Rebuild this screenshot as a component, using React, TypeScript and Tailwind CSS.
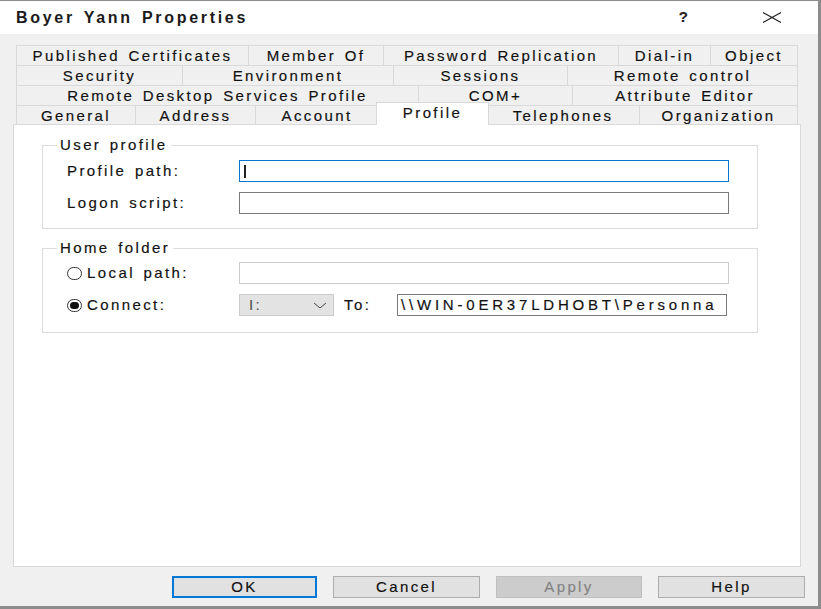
import React from "react";

const tabRows: { label: string; w: string }[][] = [
  [
    { label: "Published Certificates", w: "w-[232px]" },
    { label: "Member Of", w: "w-[135px]" },
    { label: "Password Replication", w: "w-[235px]" },
    { label: "Dial-in", w: "w-[92px]" },
    { label: "Object", w: "w-[88px]" },
  ],
  [
    { label: "Security", w: "w-[166px]" },
    { label: "Environment", w: "w-[211px]" },
    { label: "Sessions", w: "w-[174px]" },
    { label: "Remote control", w: "w-[231px]" },
  ],
  [
    { label: "Remote Desktop Services Profile", w: "w-[402px]" },
    { label: "COM+", w: "w-[154px]" },
    { label: "Attribute Editor", w: "w-[226px]" },
  ],
];

const lastRow: { label: string; w: string; sel?: boolean }[] = [
  { label: "General", w: "w-[119px]" },
  { label: "Address", w: "w-[120px]" },
  { label: "Account", w: "w-[123px]" },
  { label: "Profile", w: "w-[113px]", sel: true },
  { label: "Telephones", w: "w-[152px]" },
  { label: "Organization", w: "w-[159px]" },
];

function Radio({ checked }: { checked?: boolean }) {
  return (
    <span className="w-[15px] h-[13px] rounded-full border border-[#333333] bg-white flex items-center justify-center shrink-0">
      {checked && <span className="w-[9px] h-[7px] rounded-full bg-[#111111]" />}
    </span>
  );
}

export default function App() {
  return (
    <div className="w-[821px] h-[609px] flex flex-col border-t border-r-[3px] border-b-[3px] border-[#8c8c8c] bg-[#f0f0f0] text-[15px] text-[#111111] tracking-[2.4px] [word-spacing:2px] [-webkit-text-stroke:0.18px_#111111] [font-family:'Liberation_Sans',Arial,sans-serif] overflow-hidden">
      {/* Title bar */}
      <div className="h-[33px] bg-white flex items-center pl-[16px] pr-[36px] shrink-0">
        <span className="text-[16px] font-bold tracking-[2.7px] text-[#1a1a1a] [-webkit-text-stroke:0px]">Boyer Yann Properties</span>
        <span className="ml-auto text-[15px] font-bold tracking-normal text-[#222]">?</span>
        <svg className="ml-[74px]" width="20" height="11" viewBox="0 0 20 11">
          <path d="M1 0.5 L19 10.5 M19 0.5 L1 10.5" stroke="#222" strokeWidth="1.2" fill="none" />
        </svg>
      </div>

      {/* Body */}
      <div className="flex-1 flex flex-col pl-[13px] pt-[11px]">
        {/* Tabs */}
        <div className="ml-[3px] w-[782px] flex flex-col">
          {tabRows.map((row, i) => (
            <div key={i} className="flex h-[20px]">
              {row.map((t, j) => (
                <div
                  key={t.label}
                  className={`${t.w} h-[20px] border-t border-l border-[#d9d9d9] ${j === row.length - 1 ? "border-r" : ""} flex items-center justify-center leading-[19px] whitespace-nowrap`}
                >
                  {t.label}
                </div>
              ))}
            </div>
          ))}
          <div className="flex h-[19px] items-end">
            {lastRow.map((t, j) =>
              t.sel ? (
                <div
                  key={t.label}
                  className={`${t.w} h-[23px] mx-[-2px] mb-[-1px] relative z-10 bg-white border-t border-l border-r border-[#d9d9d9] flex justify-center pt-[2px] leading-[16px] whitespace-nowrap`}
                >
                  {t.label}
                </div>
              ) : (
                <div
                  key={t.label}
                  className={`${t.w} h-[19px] border-t border-l border-[#d9d9d9] ${j === lastRow.length - 1 ? "border-r" : ""} ${j === 4 ? "border-l-0" : ""} ${j === 2 ? "border-r-0" : ""} flex items-center justify-center leading-[19px] whitespace-nowrap`}
                >
                  {t.label}
                </div>
              )
            )}
          </div>
        </div>

        {/* Panel */}
        <div className="w-[788px] h-[443px] border border-[#d9d9d9] bg-white flex flex-col pl-[28px]">
          <fieldset className="mt-[12px] w-[716px] h-[92px] border border-[#dcdcdc] flex flex-col">
            <legend className="ml-[14px] px-[3px] leading-[16px]">User profile</legend>
            <div className="flex flex-col gap-[10px] mt-[7px] pl-[24px]">
              <div className="flex items-center h-[22px]">
                <span className="w-[172px] shrink-0">Profile path:</span>
                <div className="w-[490px] shrink-0 h-[22px] border border-[#0078d7] bg-white flex items-center pl-[4px]">
                  <span className="w-[2px] h-[13px] bg-[#222]" />
                </div>
              </div>
              <div className="flex items-center h-[22px]">
                <span className="w-[172px] shrink-0">Logon script:</span>
                <div className="w-[490px] shrink-0 h-[22px] border border-[#7a7a7a] bg-white" />
              </div>
            </div>
          </fieldset>

          <fieldset className="mt-[11px] w-[716px] h-[93px] border border-[#dcdcdc] flex flex-col">
            <legend className="ml-[14px] px-[3px] leading-[16px]">Home folder</legend>
            <div className="flex flex-col gap-[10px] mt-[6px] pl-[24px]">
              <div className="flex items-center h-[22px]">
                <span className="w-[172px] shrink-0 flex items-center gap-[5px]">
                  <Radio />
                  <span>Local path:</span>
                </span>
                <div className="w-[490px] shrink-0 h-[22px] border border-[#cccccc] bg-white" />
              </div>
              <div className="flex items-center h-[22px]">
                <span className="w-[172px] shrink-0 flex items-center gap-[5px]">
                  <Radio checked />
                  <span>Connect:</span>
                </span>
                <div className="w-[95px] shrink-0 h-[22px] border border-[#cccccc] bg-[#e3e3e3] flex items-center pl-[9px] pr-[6px]">
                  <span className="text-[#555] [-webkit-text-stroke:0.18px_#555555]">I:</span>
                  <svg className="ml-auto" width="14" height="7" viewBox="0 0 14 7">
                    <path d="M1 1 L7 6 L13 1" stroke="#444" strokeWidth="1" fill="none" />
                  </svg>
                </div>
                <span className="w-[63px] shrink-0 pl-[10px]">To:</span>
                <div className="w-[330px] shrink-0 h-[22px] border border-[#7a7a7a] bg-white flex items-center pl-[3px] overflow-hidden whitespace-nowrap tracking-[3.8px]">
                  {"\\\\WIN-0ER37LDHOBT\\Personna"}
                </div>
              </div>
            </div>
          </fieldset>
        </div>

        {/* Buttons */}
        <div className="mt-[9px] h-[22px] flex justify-end pr-[13px] gap-[16px]">
          <button className="w-[145px] h-[22px] border-2 border-[#0078d7] bg-[#e1e1e1] leading-[18px]">OK</button>
          <button className="w-[147px] h-[22px] border border-[#adadad] bg-[#e1e1e1] leading-[20px]">Cancel</button>
          <button className="w-[146px] h-[22px] border border-[#bfbfbf] bg-[#cccccc] text-[#838383] [-webkit-text-stroke:0.18px_#838383] leading-[20px]">Apply</button>
          <button className="w-[147px] h-[22px] border border-[#adadad] bg-[#e1e1e1] leading-[20px]">Help</button>
        </div>
      </div>
    </div>
  );
}
